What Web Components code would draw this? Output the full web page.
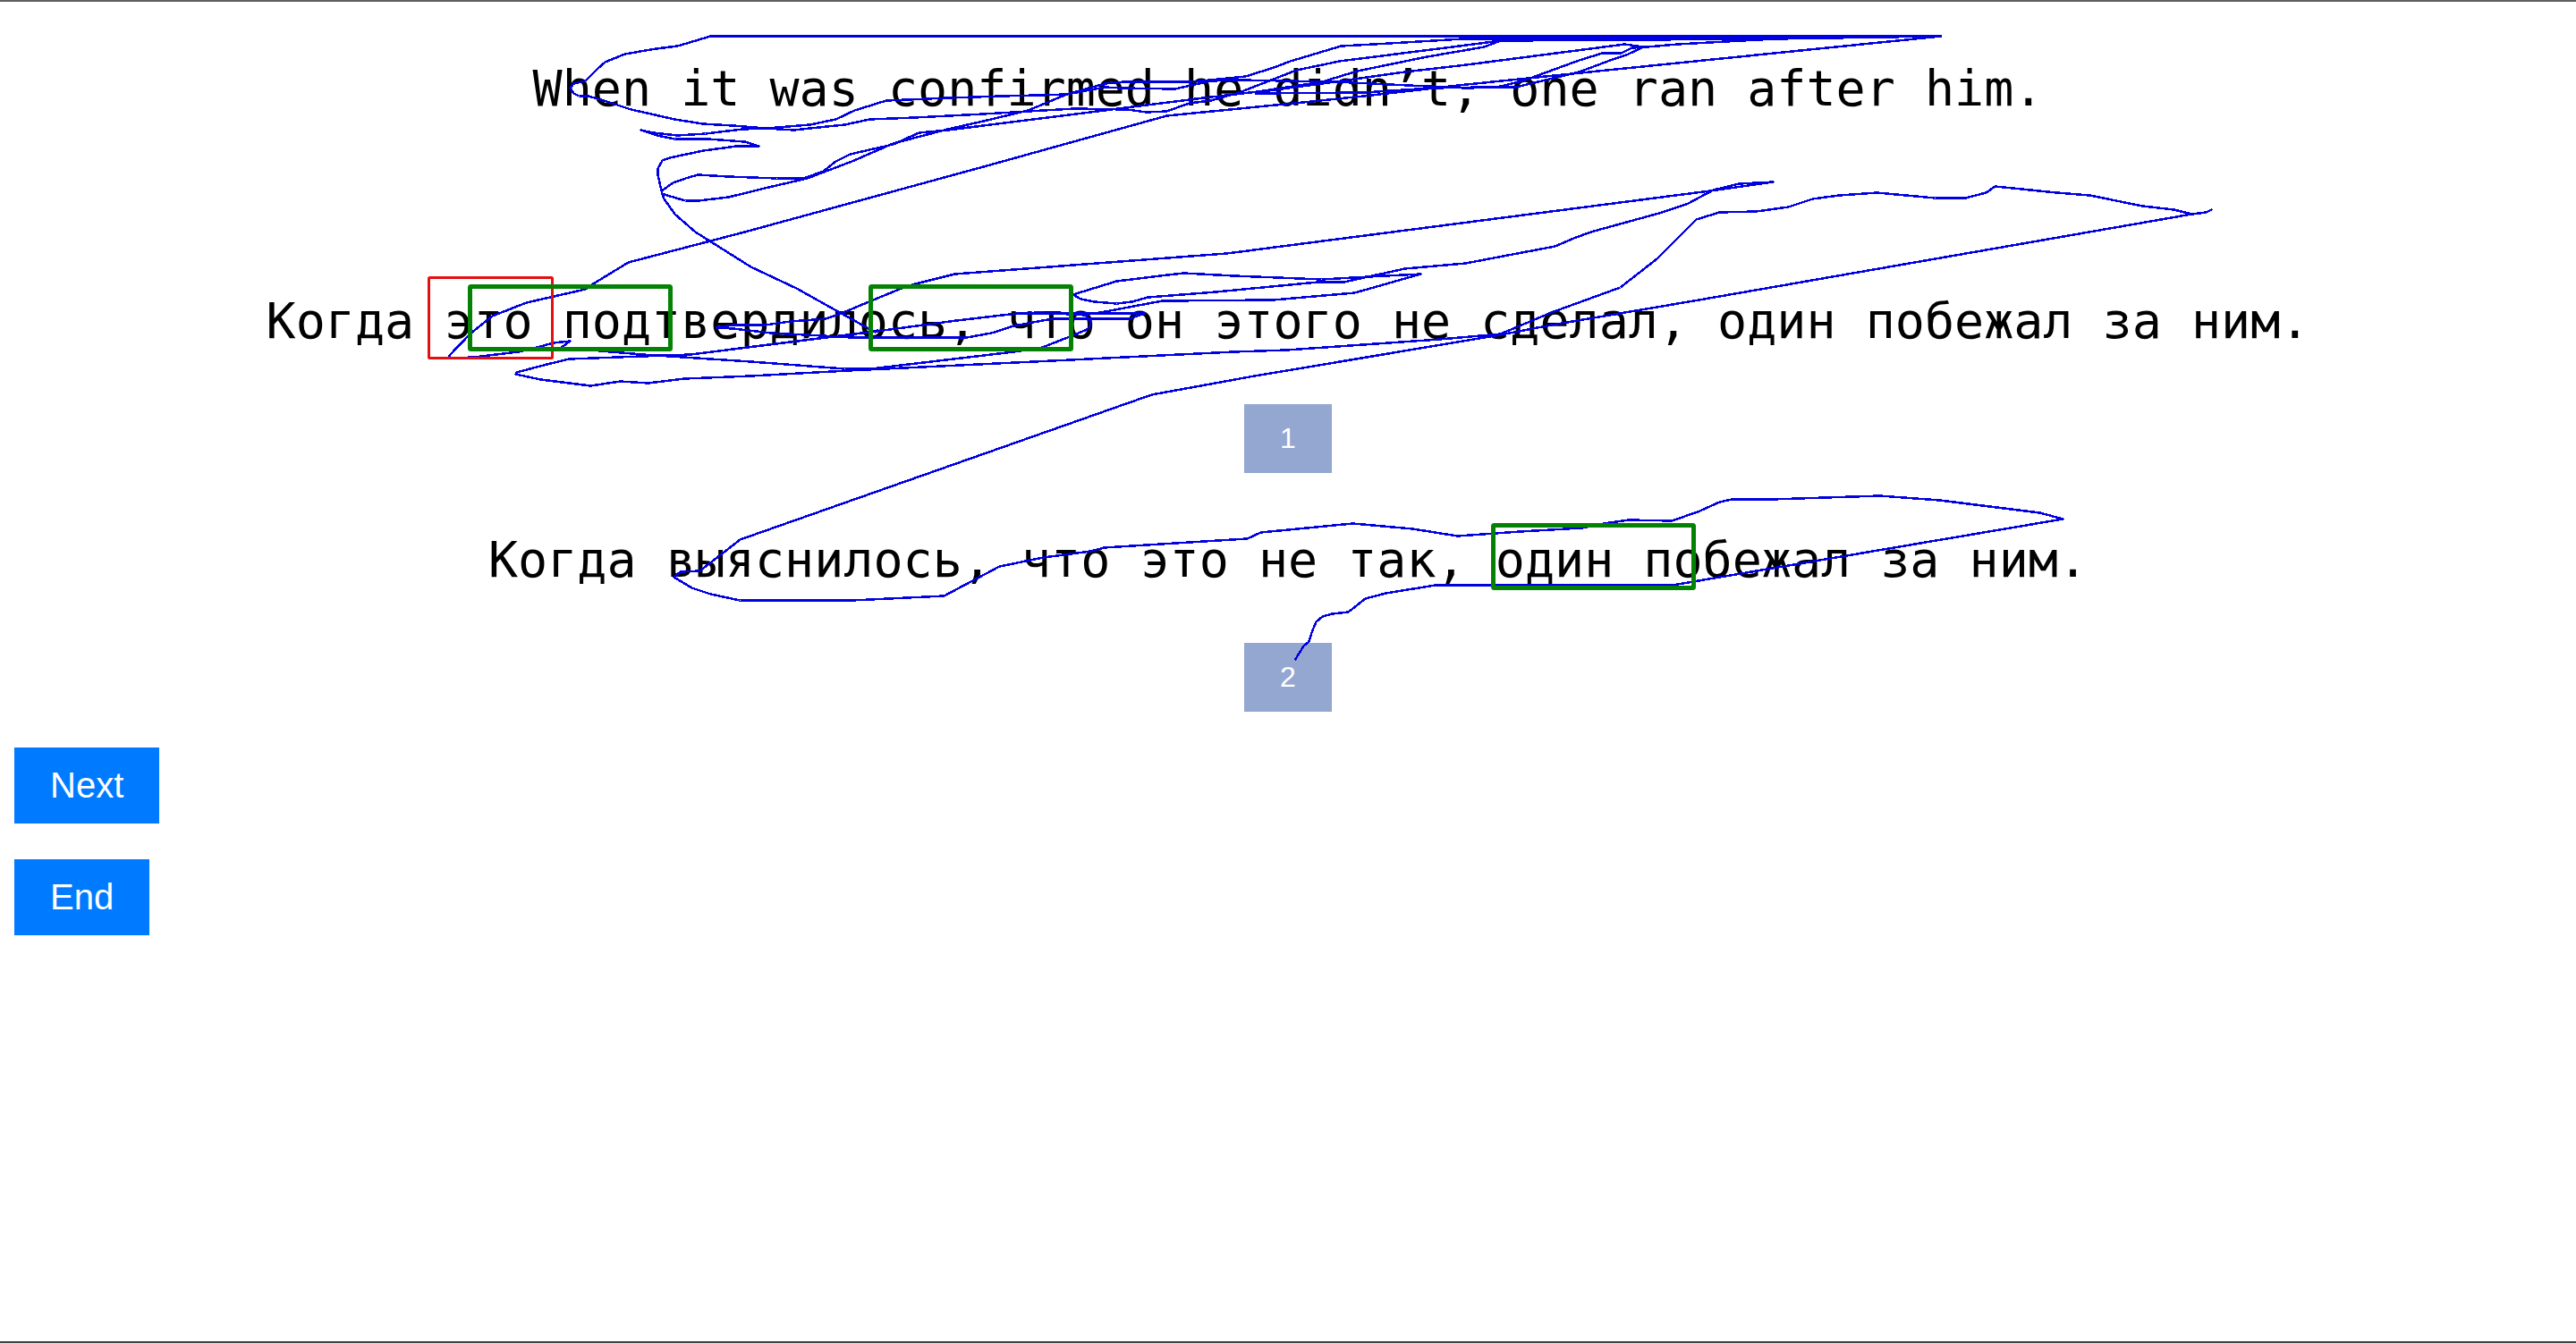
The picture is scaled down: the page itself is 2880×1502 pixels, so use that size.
<!DOCTYPE html>
<html lang="ru">
<head>
<meta charset="utf-8">
<title>Sentence choice</title>
<style>
body { margin: 0; background: #fff; color: #000; font-family: "Liberation Sans", Arial, sans-serif; }
</style>
</head>
<body>
<trial-page>
  <trial-sentence lang="en">When it was confirmed he didn’t, one ran after him.</trial-sentence>
  <trial-option number="1">Когда это подтвердилось, что он этого не сделал, один побежал за ним.</trial-option>
  <trial-option number="2">Когда выяснилось, что это не так, один побежал за ним.</trial-option>
  <action-button slot="actions">Next</action-button>
  <action-button slot="actions">End</action-button>
  <gaze-trace slot="overlay"></gaze-trace>
</trial-page>
<script>
class ShadowElement extends HTMLElement {
  connectedCallback() {
    if (!this.shadowRoot) this.attachShadow({ mode: 'open' }).innerHTML = this.markup();
  }
}

customElements.define('trial-page', class extends ShadowElement {
  markup() {
    return `<style>
      :host { display: flex; position: relative; box-sizing: border-box; min-height: 100vh; flex-direction: column;
        border-top: 2px solid #606060; border-bottom: 2px solid #404244; padding: 62px 16px 16px; }
      main { display: flex; flex-direction: column; gap: 62px; }
      nav { display: flex; flex-direction: column; align-items: flex-start; gap: 40px; padding-top: 40px; }
    </style>
    <main><slot></slot></main>
    <nav><slot name="actions"></slot></nav>
    <slot name="overlay"></slot>`;
  }
});

customElements.define('trial-sentence', class extends ShadowElement {
  markup() {
    return `<style>
      :host { display: block; margin-bottom: 128px; }
      p { margin: 0; font: 55px/70px "DejaVu Sans Mono", "Liberation Mono", monospace; text-align: center; }
    </style><p><slot></slot></p>`;
  }
});

customElements.define('trial-option', class extends ShadowElement {
  markup() {
    return `<style>
      :host { display: flex; flex-direction: column; align-items: center; gap: 58px; }
      p { margin: 0; font: 55px/70px "DejaVu Sans Mono", "Liberation Mono", monospace; text-align: center; }
      button { border: 0; margin: 0; padding: 20px 40px; background: #94a7d1; color: #fff;
        font: 32px/37px "Liberation Sans", Arial, sans-serif; }
    </style><p><slot></slot></p><button type="button">${this.getAttribute('number')}</button>`;
  }
});

customElements.define('action-button', class extends ShadowElement {
  markup() {
    return `<style>
      :host { display: block; }
      button { display: block; border: 0; margin: 0; padding: 20px 40px; background: #007bff; color: #fff;
        font: 40px/45px "Liberation Sans", Arial, sans-serif; }
    </style><button type="button"><slot></slot></button>`;
  }
});

customElements.define('gaze-trace', class extends ShadowElement {
  markup() {
    const paths = [
      '2171,40 795,40 758,51 734,54 699,60 677,69 668,77 655,90 642,93 638,98 642,104 648,107 658,107 676,112 706,122 755,133 786,138 820,140 857,143 888,145 906,143 945,139 973,133 1023,131 1100,127 1150,124 1202,121 1261,122 1282,125 1305,124 1330,115 1354,112 1386,103 1450,78 1498,68 1640,50 1678,45 1985,43 2171,40',
      '2171,40 1636,43 1554,48 1500,51 1443,68 1425,75 1393,85 1343,90 1329,91 1257,91 1236,93 1193,105 1161,106 1120,107 1060,109 992,112 985,114 956,123 935,133 906,139 857,143 831,144 789,149 758,151 731,148 717,145 735,151 755,155 792,155 833,158 849,163 824,163 787,168 749,176 741,179 736,188 736,195 740,213 743,222 755,239 778,259 840,298 891,322 941,350 979,371 982,368',
      '740,213 753,204 767,199 781,195 815,197 869,199 899,199 921,191 935,180 951,172 999,161 1028,148 1060,145 1100,140 1243,122 1346,109 1407,102 1479,91 1518,79 1596,63 1660,52 1678,45',
      '740,216 753,220 767,224 781,224 815,220 864,208 903,199 953,180 999,160 1060,144 1100,135 1150,123 1193,105 1236,97 1254,98 1314,99 1332,95 1354,90 1386,89 1493,91 1575,95 1640,98 1674,97 1703,90 1766,67 1792,59 1813,59 1825,53 1842,52 1876,49 1985,43',
      '1404,104 1525,103 1600,98 1660,97 1695,97 1766,80 1798,68 1821,60 1838,52 1817,49 1640,72 1571,80 1493,91 1404,103',
      '2171,40 1640,94 1525,107 1457,114 1305,129 1100,186 833,259 703,293 662,318 655,323 589,338 551,353 526,373 503,397 503,400 530,399 580,393 601,388 619,383 638,381 628,388 683,393 719,396 840,404 945,412 974,412 1134,393 1166,388 1199,375 1218,367 1220,360 1215,352 1163,349 1138,350 1070,358 988,369 820,390 773,396 637,401 612,407 578,416 577,418 605,424 661,431 694,426 725,428 766,423 840,420 949,414 1177,403 1380,393 1439,391 1610,379 1678,373 1735,349 1812,321 1853,289 1897,245 1923,237 1964,236 2000,231 2027,222 2057,218 2099,215 2164,221 2198,221 2221,215 2231,208 2300,215 2337,218 2396,230 2431,234 2451,239 2467,237 2473,234 2467,237 2451,239 1900,335 1735,363 1678,374 1403,420 1288,441 1200,472 828,603 783,638 761,639 754,645 774,657 795,664 828,671 953,671 1056,666 1118,633 1167,623 1220,616 1235,612 1395,602 1410,595 1513,585 1580,591 1630,599 1700,594 1769,590 1794,585 1821,581 1870,582 1901,571 1923,561 1937,558 1981,558 2102,554 2169,559 2281,573 2307,580 1870,654 1605,654 1550,663 1527,669 1508,684 1490,686 1479,689 1472,695 1467,707 1464,717 1458,722 1448,738',
      '801,366 820,363 856,363 884,359 924,356 941,350 972,337 1006,323 1020,318 1068,306 1372,283 1920,212 1983,203 1945,205 1916,212 1888,227 1859,237 1779,259 1760,266 1739,275 1639,294 1571,300 1503,315 1474,315 1360,326 1284,332 1266,337 1249,339 1224,337 1209,334 1200,329 1249,314 1306,307 1324,305 1380,308 1478,312 1531,309 1589,306 1515,327 1424,335 1300,336 1231,349 1209,351 1138,350',
      '1163,350 1281,350 1263,356 1177,356 1134,364 1109,372 1081,377 952,377 920,375 863,372 820,367 801,366'
    ];
    return `<style>
      :host { position: absolute; inset: -2px 0 auto 0; pointer-events: none; }
      svg { display: block; width: 100%; height: auto; fill: none; }
      polyline { stroke: #0000e1; stroke-width: 2.5; stroke-linejoin: round; shape-rendering: crispEdges; }
      .miss { stroke: #e60f0f; stroke-width: 3; }
      .area { stroke: #058205; stroke-width: 5; }
    </style>
    <svg viewBox="0 0 2880 1502" aria-hidden="true">
      <g transform="translate(-.5 .5)">${paths.map(p => `<polyline points="${p}"/>`).join('')}</g>
      <rect class="miss" x="479.5" y="310.5" width="138" height="90" rx="1"/>
      <rect class="area" x="525.5" y="320.5" width="224" height="70" rx="1"/>
      <rect class="area" x="973.5" y="320.5" width="224" height="70" rx="1"/>
      <rect class="area" x="1669.5" y="587.5" width="224" height="70" rx="1"/>
    </svg>`;
  }
});
</script>
</body>
</html>
